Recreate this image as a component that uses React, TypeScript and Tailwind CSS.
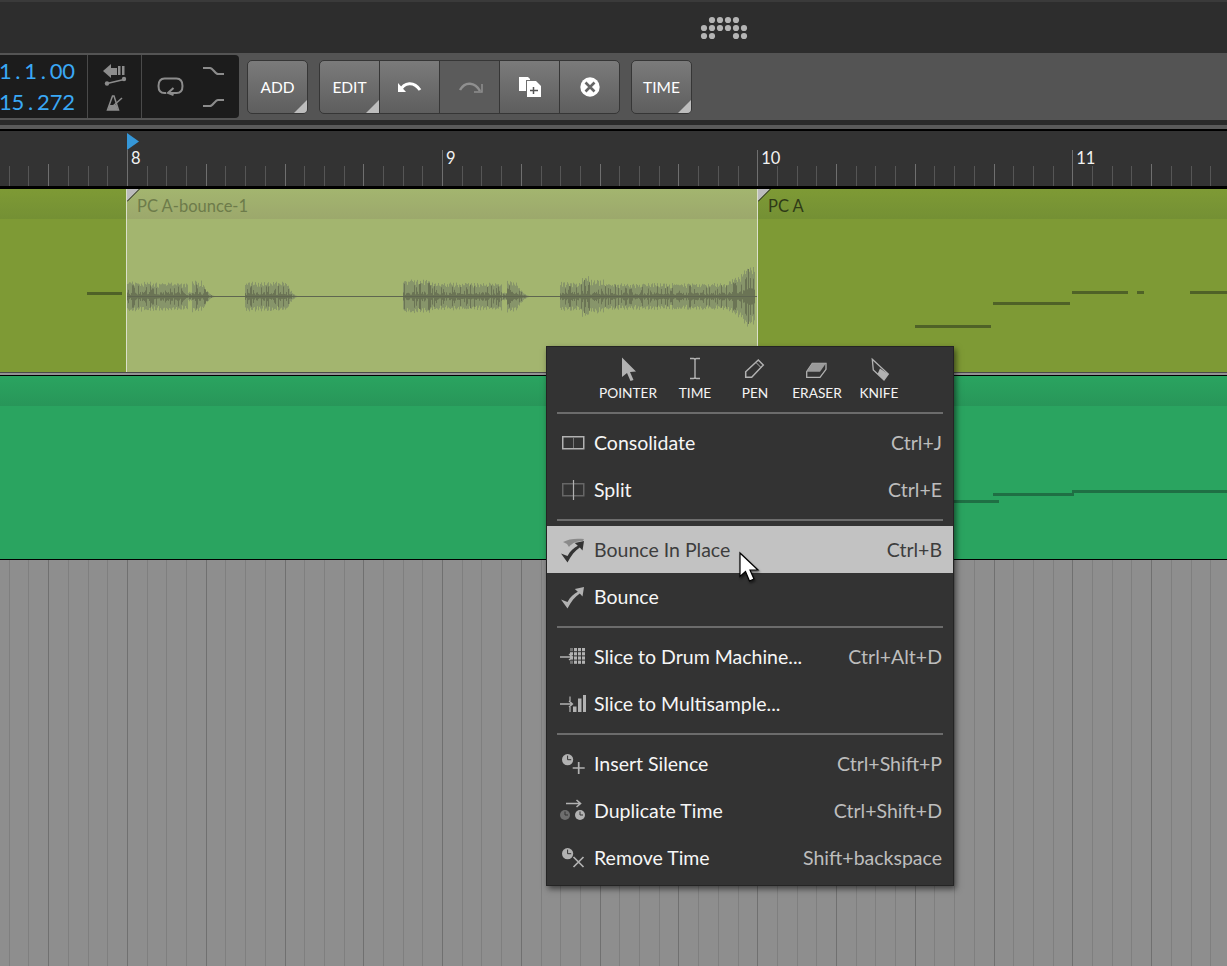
import type { ReactNode } from "react";

const TICK = 19.695;
const FIRST_TICK = 8.8;

// ruler ticks and the grid in the empty area share the same positions
const ticks = Array.from({ length: 62 }, (_, i) => ({
  x: Math.round(FIRST_TICK + i * TICK) + 0.5,
  major: i % 4 === 2,
}));

function rand(seed: number) {
  const v = Math.sin(seed * 127.1) * 43758.5453;
  return v - Math.floor(v);
}

function ramp(x: number, a: number, b: number, from: number, to: number) {
  return from + ((x - a) / (b - a)) * (to - from);
}

function decay(x: number, a: number, b: number, from: number) {
  const t = 1 - (x - a) / (b - a);
  return from * t * t + 0.5;
}

// rough envelope of the bounced clip, x is page pixels
function amp(x: number) {
  if (x < 188) return 15.5 - (x - 127) * 0.03;
  if (x < 192) return 5;
  if (x < 202) return 16;
  if (x < 215) return decay(x, 202, 215, 14);
  if (x < 245) return 0;
  if (x < 287) return 15;
  if (x < 298) return decay(x, 287, 298, 13);
  if (x < 403) return 0;
  if (x < 502) return x < 430 ? 17 : 14;
  if (x < 507) return 4;
  if (x < 517) return 16;
  if (x < 530) return decay(x, 517, 530, 13);
  if (x < 560) return 0;
  if (x < 582) return 15;
  if (x < 590) return 21;
  if (x < 604) return 17;
  if (x < 728) return 13.5;
  if (x < 742) return ramp(x, 728, 742, 15, 24);
  if (x < 750) return ramp(x, 742, 750, 24, 37);
  if (x < 755) return 31;
  return 0;
}

function wavePaths() {
  let light = "";
  let dark = "";
  for (let x = 127; x < 756; x++) {
    const a = amp(x);
    if (!a) continue;
    const lx = x - 127 + 0.5;
    const hatch = x % 3 === 0 ? 1 : 0.7 + rand(x + 40) * 0.3;
    const up = a * hatch * (0.85 + rand(x) * 0.15);
    const down = a * hatch * (0.85 + rand(x + 900) * 0.15);
    const r = rand(x + 300);
    const core = a * (r > 0.7 ? 0.4 + rand(x + 77) * 0.45 : 0.1 + r * 0.3);
    light += `M${lx} ${107.5 - up}V${107.5 + down}`;
    dark += `M${lx} ${107.5 - core}V${107.5 + core}`;
  }
  return { light, dark };
}

const wave = wavePaths();

function Waveform() {
  return (
    <svg className="absolute left-0 top-0" width="631" height="183">
      <path d={wave.light} stroke="#87956a" strokeWidth="1" fill="none" />
      <path d={wave.dark} stroke="#6b7455" strokeWidth="1" fill="none" />
      <rect x="0" y="107" width="630" height="1" fill="#5f6650" />
    </svg>
  );
}

function Logo() {
  const rows = [
    [12, 20, 28, 36],
    [4, 12, 20, 28, 36, 44],
    [4, 12, 36, 44],
  ];
  return (
    <svg width="48" height="24" viewBox="0 0 48 24">
      {rows.map((row, r) =>
        row.map((x) => <circle key={`${r}-${x}`} cx={x} cy={4 + r * 8} r="3.1" fill="#b4b4b4" />)
      )}
    </svg>
  );
}

function Corner() {
  return (
    <svg className="absolute bottom-0 right-0" width="13" height="13">
      <polygon points="13,0 13,13 0,13" fill="#bdbdbd" />
    </svg>
  );
}

function Digits({ text }: { text: string }) {
  return (
    <div className="flex justify-end">
      {text.split("").map((c, i) => (
        <span key={i} className="w-[12.7px] shrink-0 text-center">
          {c}
        </span>
      ))}
    </div>
  );
}

function ToolBtn({ children, className = "" }: { children: ReactNode; className?: string }) {
  return (
    <div
      className={`relative flex h-full w-[60px] items-center justify-center border-r border-[#363636] text-[15.5px] text-white last:w-[59px] last:border-r-0 ${className}`}
    >
      {children}
    </div>
  );
}

const btnGroup =
  "flex h-[54px] overflow-hidden rounded-[5px] border border-[#363636] bg-gradient-to-b from-[#7b7b7b] to-[#5e5e5e]";

function Toolbar() {
  return (
    <div className="flex h-[67px] items-start bg-[#545454]">
      <div className="mt-[2px] flex h-[63px] w-[239px] rounded-r-[4px] bg-[#1c1c1c]">
        <div className="flex w-[88px] flex-col justify-center border-r border-[#4a4a4a] pb-[2px] pr-[12px] text-[22px] leading-[31px] text-[#3aa8f5]">
          <Digits text="1.1.00" />
          <Digits text="15.272" />
        </div>
        <div className="flex w-[54px] flex-col items-center justify-center gap-[6px] border-r border-[#4a4a4a]">
          <svg width="26" height="26" viewBox="0 0 26 26" fill="#8c8c8c">
            <polygon points="1,8 9,1 9,15" />
            <rect x="9" y="5" width="6" height="7" />
            <rect x="16" y="3" width="2.5" height="9" />
            <rect x="20" y="3" width="2.5" height="9" />
            <path d="M5 20.5L22 16.5" stroke="#8c8c8c" strokeWidth="1.5" />
            <circle cx="5" cy="20.5" r="2.2" />
            <circle cx="22" cy="16" r="2.2" />
          </svg>
          <svg width="18" height="16" viewBox="0 0 18 16" fill="none">
            <path d="M1.5 15L6.5 1H8L12.5 15Z" stroke="#8c8c8c" strokeWidth="1.5" />
            <path d="M2 15L3.5 10H10.5L12 15Z" fill="#8c8c8c" />
            <path d="M7 11L16 3" stroke="#8c8c8c" strokeWidth="1.5" />
          </svg>
        </div>
        <div className="flex flex-1 items-center justify-between pl-[15px] pr-[14px]">
          <svg className="-mt-[1px]" width="27" height="20" viewBox="0 0 27 20" fill="none">
            <path
              d="M9 17H7.5C3.5 17 1.5 14.5 1.5 10S3.5 2.5 7.5 2.5H19.5C23.5 2.5 25.5 5.5 25.5 10S23.5 17 19.5 17H12"
              stroke="#8c8c8c"
              strokeWidth="2"
            />
            <path d="M16.5 12L11 17L16.5 19" stroke="#8c8c8c" strokeWidth="2" />
          </svg>
          <div className="flex flex-col gap-[22px]">
            <svg width="22" height="10" viewBox="0 0 22 10" fill="none">
              <path d="M0 2H7C10 2 12 8 15 8H21" stroke="#8c8c8c" strokeWidth="2" />
            </svg>
            <svg width="22" height="10" viewBox="0 0 22 10" fill="none">
              <path d="M0 8H7C10 8 12 2 15 2H21" stroke="#8c8c8c" strokeWidth="2" />
            </svg>
          </div>
        </div>
      </div>
      <div className="ml-[8px] mt-[7px] flex gap-[11px]">
        <div className={btnGroup}>
          <ToolBtn className="pt-px">
            ADD
            <Corner />
          </ToolBtn>
        </div>
        <div className={btnGroup}>
          <ToolBtn className="pt-px">
            EDIT
            <Corner />
          </ToolBtn>
          <ToolBtn>
            <svg width="26" height="14" viewBox="0 0 26 14" fill="none">
              <path d="M3 11C7 2 17 1 23 10" stroke="#fff" strokeWidth="3" />
              <path d="M1 3V12H9Z" fill="#fff" />
            </svg>
          </ToolBtn>
          <ToolBtn className="bg-[#5b5b5b]">
            <svg width="26" height="14" viewBox="0 0 26 14" fill="none">
              <path d="M3 10C8 1 18 2 23 11" stroke="#8f8f8f" strokeWidth="2.5" />
              <path d="M25 4V12H17" stroke="#8f8f8f" strokeWidth="1.5" />
            </svg>
          </ToolBtn>
          <ToolBtn>
            <svg width="24" height="22" viewBox="0 0 24 22" fill="#fff">
              <path d="M1 1H10L12 3V4H8V15H1Z" />
              <path d="M9 5H18L23 10V21H9Z" />
              <path d="M15.5 11V18M12 14.5H20" stroke="#555" strokeWidth="1.5" />
            </svg>
          </ToolBtn>
          <ToolBtn>
            <svg width="20" height="20" viewBox="0 0 20 20">
              <circle cx="10" cy="10" r="9.7" fill="#fff" />
              <path d="M5.5 5.5L14.5 14.5M14.5 5.5L5.5 14.5" stroke="#666" strokeWidth="2.6" />
            </svg>
          </ToolBtn>
        </div>
        <div className={btnGroup}>
          <ToolBtn className="pt-px">
            TIME
            <Corner />
          </ToolBtn>
        </div>
      </div>
    </div>
  );
}

function Ruler() {
  return (
    <div className="relative h-[55px] bg-[#333333]">
      <svg className="absolute left-0 top-0" width="1227" height="55">
        {ticks.map((t) => (
          <line
            key={t.x}
            x1={t.x}
            x2={t.x}
            y1={t.major ? 33 : 35}
            y2="55"
            stroke={t.major ? "#6f6f6f" : "#565656"}
          />
        ))}
      </svg>
      <div className="relative flex pl-[127px] pt-[19px] text-[16.5px] leading-[16px] text-[#f2f2f2]">
        {["8", "9", "10", "11"].map((n) => (
          <div key={n} className="h-[36px] w-[315.1px] shrink-0 border-l border-[#6f6f6f] pl-[3px]">
            {n}
          </div>
        ))}
      </div>
      <svg className="absolute left-[127px] top-[2px]" width="12" height="18">
        <polygon points="0,0 12,8.5 0,17" fill="#3597d8" />
      </svg>
    </div>
  );
}

function ClipCorner() {
  return (
    <svg className="absolute left-0 top-0" width="13" height="13">
      <polygon points="0,0 12,0 0,12" fill="#bcbcbc" />
      <line x1="12.5" y1="0" x2="0" y2="12.5" stroke="#1a1a1a" />
    </svg>
  );
}

function Note({ className }: { className: string }) {
  return <div className={`absolute h-[3px] ${className}`} />;
}

function Tracks() {
  return (
    <>
      <div className="h-[3px] bg-black" />
      <div className="relative flex h-[183px] bg-[#7e9a35]">
        <div className="h-[30px] w-[126px] bg-gradient-to-b from-[#7e9a35] to-[#749034]" />
        <div className="relative h-full w-[632px] border-x border-[#dbe0cb] bg-[#a3b56f]">
          <div className="h-[30px] bg-gradient-to-b from-[#a3b56f] to-[#9ca86c] pl-[10px] pt-[8px] text-[16.5px] leading-[18px] text-[#6d7b4a]">
            PC A-bounce-1
          </div>
          <Waveform />
          <ClipCorner />
        </div>
        <div className="relative h-[30px] flex-1 bg-gradient-to-b from-[#7e9a35] to-[#749034] pl-[10px] pt-[8px] text-[16.5px] leading-[18px] text-[#2f3b17]">
          <ClipCorner />
          PC A
        </div>
        <Note className="left-[87px] top-[103px] w-[35px] bg-[#4f6227]" />
        <Note className="left-[915px] top-[136px] w-[76px] bg-[#4f6227]" />
        <Note className="left-[993px] top-[113px] w-[77px] bg-[#4f6227]" />
        <Note className="left-[1072px] top-[102px] w-[56px] bg-[#4f6227]" />
        <Note className="left-[1137px] top-[102px] w-[7px] bg-[#4f6227]" />
        <Note className="left-[1190px] top-[102px] w-[37px] bg-[#4f6227]" />
      </div>
      <div className="h-px bg-[#4a4a4a]" />
      <div className="h-[2px] bg-[#939393]" />
      <div className="h-px bg-black" />
      <div className="relative h-[183px] bg-[#2aa460]">
        <div className="h-[30px] bg-gradient-to-b from-[#2aa460] to-[#289659]" />
        <Note className="left-[954px] top-[124px] w-[45px] bg-[#1f6f44]" />
        <Note className="left-[993px] top-[117px] w-[81px] bg-[#1f6f44]" />
        <Note className="left-[1072px] top-[114px] w-[155px] bg-[#1f6f44]" />
      </div>
      <div className="h-px bg-black" />
      <div className="relative h-[406px] bg-[#8e8e8e]">
        <svg className="absolute left-0 top-0" width="1227" height="406">
          {ticks.map((t) => (
            <line
              key={t.x}
              x1={t.x}
              x2={t.x}
              y1="0"
              y2="406"
              stroke={t.major ? "#707070" : "#7f7f7f"}
            />
          ))}
        </svg>
      </div>
    </>
  );
}

const GRAY = "#b2b2b2";

function Clock({ cx, cy, r = 5.6, fill = GRAY }: { cx: number; cy: number; r?: number; fill?: string }) {
  return (
    <g>
      <circle cx={cx} cy={cy} r={r} fill={fill} />
      <path d={`M${cx} ${cy - r + 1.5}V${cy}H${cx + r - 2}`} stroke="#333" strokeWidth="1" fill="none" />
    </g>
  );
}

const checkPath =
  "M1 15.5L7.5 18C10 13 14 9.8 17.8 7.8L14.8 5L24 3L22.5 12.5L19.8 9.6C15 12.5 11 18 7.5 24.5Z";

const icons: Record<string, ReactNode> = {
  consolidate: (
    <>
      <rect x="2.75" y="6.75" width="21" height="12" stroke={GRAY} strokeWidth="1.5" fill="none" />
      <path d="M13.5 7V18" stroke="#777" />
    </>
  ),
  split: (
    <>
      <rect x="2.75" y="6.75" width="21" height="12" stroke="#666" strokeWidth="1.5" fill="none" />
      <path d="M13.5 3V23" stroke={GRAY} strokeWidth="1.2" />
    </>
  ),
  bounceInPlace: (
    <>
      <path d="M3 5C8 2 16 1 24 2L23 4C17 4 12 6 9 10L7 7Z" fill="#8a8a8a" />
      <path d={checkPath} fill="#333" transform="translate(0 1)" />
    </>
  ),
  bounce: <path d={checkPath} fill={GRAY} />,
  drum: (
    <>
      {[0, 1, 2, 3].map((r) =>
        [0, 1, 2, 3].map((c) => (
          <rect
            key={`${r}${c}`}
            x={10 + c * 4}
            y={4 + r * 4.2}
            width="3"
            height="3.2"
            fill={GRAY}
            opacity={c === 0 && r !== 1 && r !== 2 ? 0.5 : 1}
          />
        ))
      )}
      <path d="M0 13H12M9 10L12.5 13L9 16" stroke={GRAY} strokeWidth="1.3" fill="none" />
    </>
  ),
  multi: (
    <>
      <path d="M0 13H12M9 10L12.5 13L9 16" stroke={GRAY} strokeWidth="1.3" fill="none" />
      <path d="M10 5.5V10M10 16V21" stroke={GRAY} strokeWidth="1.2" />
      <rect x="13" y="15.5" width="3.5" height="5.5" fill={GRAY} />
      <rect x="18" y="7.5" width="3.5" height="13.5" fill={GRAY} />
      <rect x="23" y="4" width="3" height="17" fill={GRAY} />
    </>
  ),
  insert: (
    <>
      <Clock cx={7.6} cy={8.7} />
      <path d="M18.7 11V23M12.7 17H24.7" stroke={GRAY} strokeWidth="1.7" />
    </>
  ),
  duplicate: (
    <>
      <path d="M6 5.5H20M16.5 2L20.5 5.5L16.5 9" stroke={GRAY} strokeWidth="1.6" fill="none" />
      <Clock cx={5} cy={17} r={5} fill="#6e6e6e" />
      <Clock cx={20} cy={17} r={5} />
    </>
  ),
  remove: (
    <>
      <Clock cx={7.6} cy={8.7} />
      <path d="M13.5 12L23.5 22M23.5 12L13.5 22" stroke={GRAY} strokeWidth="1.7" />
    </>
  ),
};

function Item({
  icon,
  label,
  keys,
  active,
}: {
  icon: string;
  label: string;
  keys?: string;
  active?: boolean;
}) {
  return (
    <div
      className={`flex h-[47px] items-center pl-[13px] pr-[11px] text-[19.5px] ${
        active ? "bg-[#c2c2c2] text-[#3d3d3d]" : "text-[#f6f6f6]"
      }`}
    >
      <svg className="mr-[8px] shrink-0" width="26" height="26" viewBox="0 0 26 26">
        {icons[icon]}
      </svg>
      <span>{label}</span>
      {keys && <span className={`ml-auto ${active ? "text-[#3d3d3d]" : "text-[#bdbdbd]"}`}>{keys}</span>}
    </div>
  );
}

function Sep({ className }: { className: string }) {
  return <div className={`mx-[10px] h-[2px] bg-[#6c6c6c] ${className}`} />;
}

function ToolIcon({ label, className, children }: { label: string; className: string; children: ReactNode }) {
  return (
    <div className={`flex flex-col items-center ${className}`}>
      <svg width="26" height="26" viewBox="0 0 26 26" className="mb-[3px]">
        {children}
      </svg>
      {label}
    </div>
  );
}

function ContextMenu() {
  return (
    <div className="absolute left-[546px] top-[346px] h-[540px] w-[408px] border border-[#242424] bg-[#333333] shadow-[2px_3px_6px_rgba(0,0,0,0.55)]">
      <div className="flex h-[65px] pl-[50px] pt-[9px] text-[13.7px] leading-[16px] text-[#f4f4f4]">
        <ToolIcon label="POINTER" className="w-[62px] shrink-0">
          <polygon points="7,1.5 21,15.5 15,16 18.5,24 15.5,25 12,17 7,21" fill={GRAY} />
        </ToolIcon>
        <ToolIcon label="TIME" className="ml-[6px] w-[60px] shrink-0">
          <path d="M8 2.5H11.5C12.5 2.5 13 3 13 4V21C13 22 12.5 22.5 11.5 22.5H8M18 2.5H14.5C13.5 2.5 13 3 13 4M18 22.5H14.5C13.5 22.5 13 22 13 21" stroke={GRAY} strokeWidth="1.4" fill="none" />
        </ToolIcon>
        <ToolIcon label="PEN" className="w-[60px] shrink-0">
          <path d="M3.7 15.7L16.3 4L21.3 9L9.7 21.3H3.7Z" stroke={GRAY} strokeWidth="1.5" fill="none" />
          <path d="M14 6.5L19 11.5" stroke={GRAY} strokeWidth="1" />
        </ToolIcon>
        <ToolIcon label="ERASER" className="ml-[1px] w-[62px] shrink-0">
          <path d="M2.7 15.7L8.3 7.3H22V13.3L16 21.3H2.7Z" stroke={GRAY} strokeWidth="1.3" fill="none" />
          <path d="M8.3 7.3H22L16 15.7H2.7Z" fill="#9a9a9a" />
        </ToolIcon>
        <ToolIcon label="KNIFE" className="w-[62px] shrink-0">
          <path d="M6.3 3.3L22.3 18L18 24L7.3 14Z" stroke={GRAY} strokeWidth="1.3" fill="none" />
          <path d="M14 12.5L22.3 18L18 24L11.5 18Z" fill={GRAY} />
        </ToolIcon>
      </div>
      <Sep className="mb-[5px]" />
      <Item icon="consolidate" label="Consolidate" keys="Ctrl+J" />
      <Item icon="split" label="Split" keys="Ctrl+E" />
      <Sep className="mb-[5px] mt-[6px]" />
      <Item icon="bounceInPlace" label="Bounce In Place" keys="Ctrl+B" active />
      <Item icon="bounce" label="Bounce" />
      <Sep className="mb-[5px] mt-[6px]" />
      <Item icon="drum" label="Slice to Drum Machine..." keys="Ctrl+Alt+D" />
      <Item icon="multi" label="Slice to Multisample..." />
      <Sep className="mb-[5px] mt-[6px]" />
      <Item icon="insert" label="Insert Silence" keys="Ctrl+Shift+P" />
      <Item icon="duplicate" label="Duplicate Time" keys="Ctrl+Shift+D" />
      <Item icon="remove" label="Remove Time" keys="Shift+backspace" />
    </div>
  );
}

function Cursor() {
  return (
    <svg
      className="absolute left-[737px] top-[550px] drop-shadow-[1px_2px_1px_rgba(0,0,0,0.5)]"
      width="26"
      height="36"
      viewBox="0 0 26 36"
    >
      <polygon
        points="3,3 3,26.5 8.5,21.5 12.5,31 17,29 13,20 21,20"
        fill="#fff"
        stroke="#000"
        strokeWidth="1.2"
      />
    </svg>
  );
}

export default function App() {
  return (
    <div className="relative h-[966px] w-full overflow-hidden bg-[#2d2d2d] [font-family:Lato,sans-serif]">
      <div className="flex h-[53px] items-center justify-center border-t-[2px] border-[#3a3a3a] bg-[#2d2d2d] pl-[221px] pt-[1px]">
        <Logo />
      </div>
      <Toolbar />
      <div className="h-[5px] bg-[#2a2a2a]" />
      <div className="h-[4px] bg-[#5a5a5a]" />
      <div className="h-[2px] bg-black" />
      <Ruler />
      <Tracks />
      <ContextMenu />
      <Cursor />
    </div>
  );
}
